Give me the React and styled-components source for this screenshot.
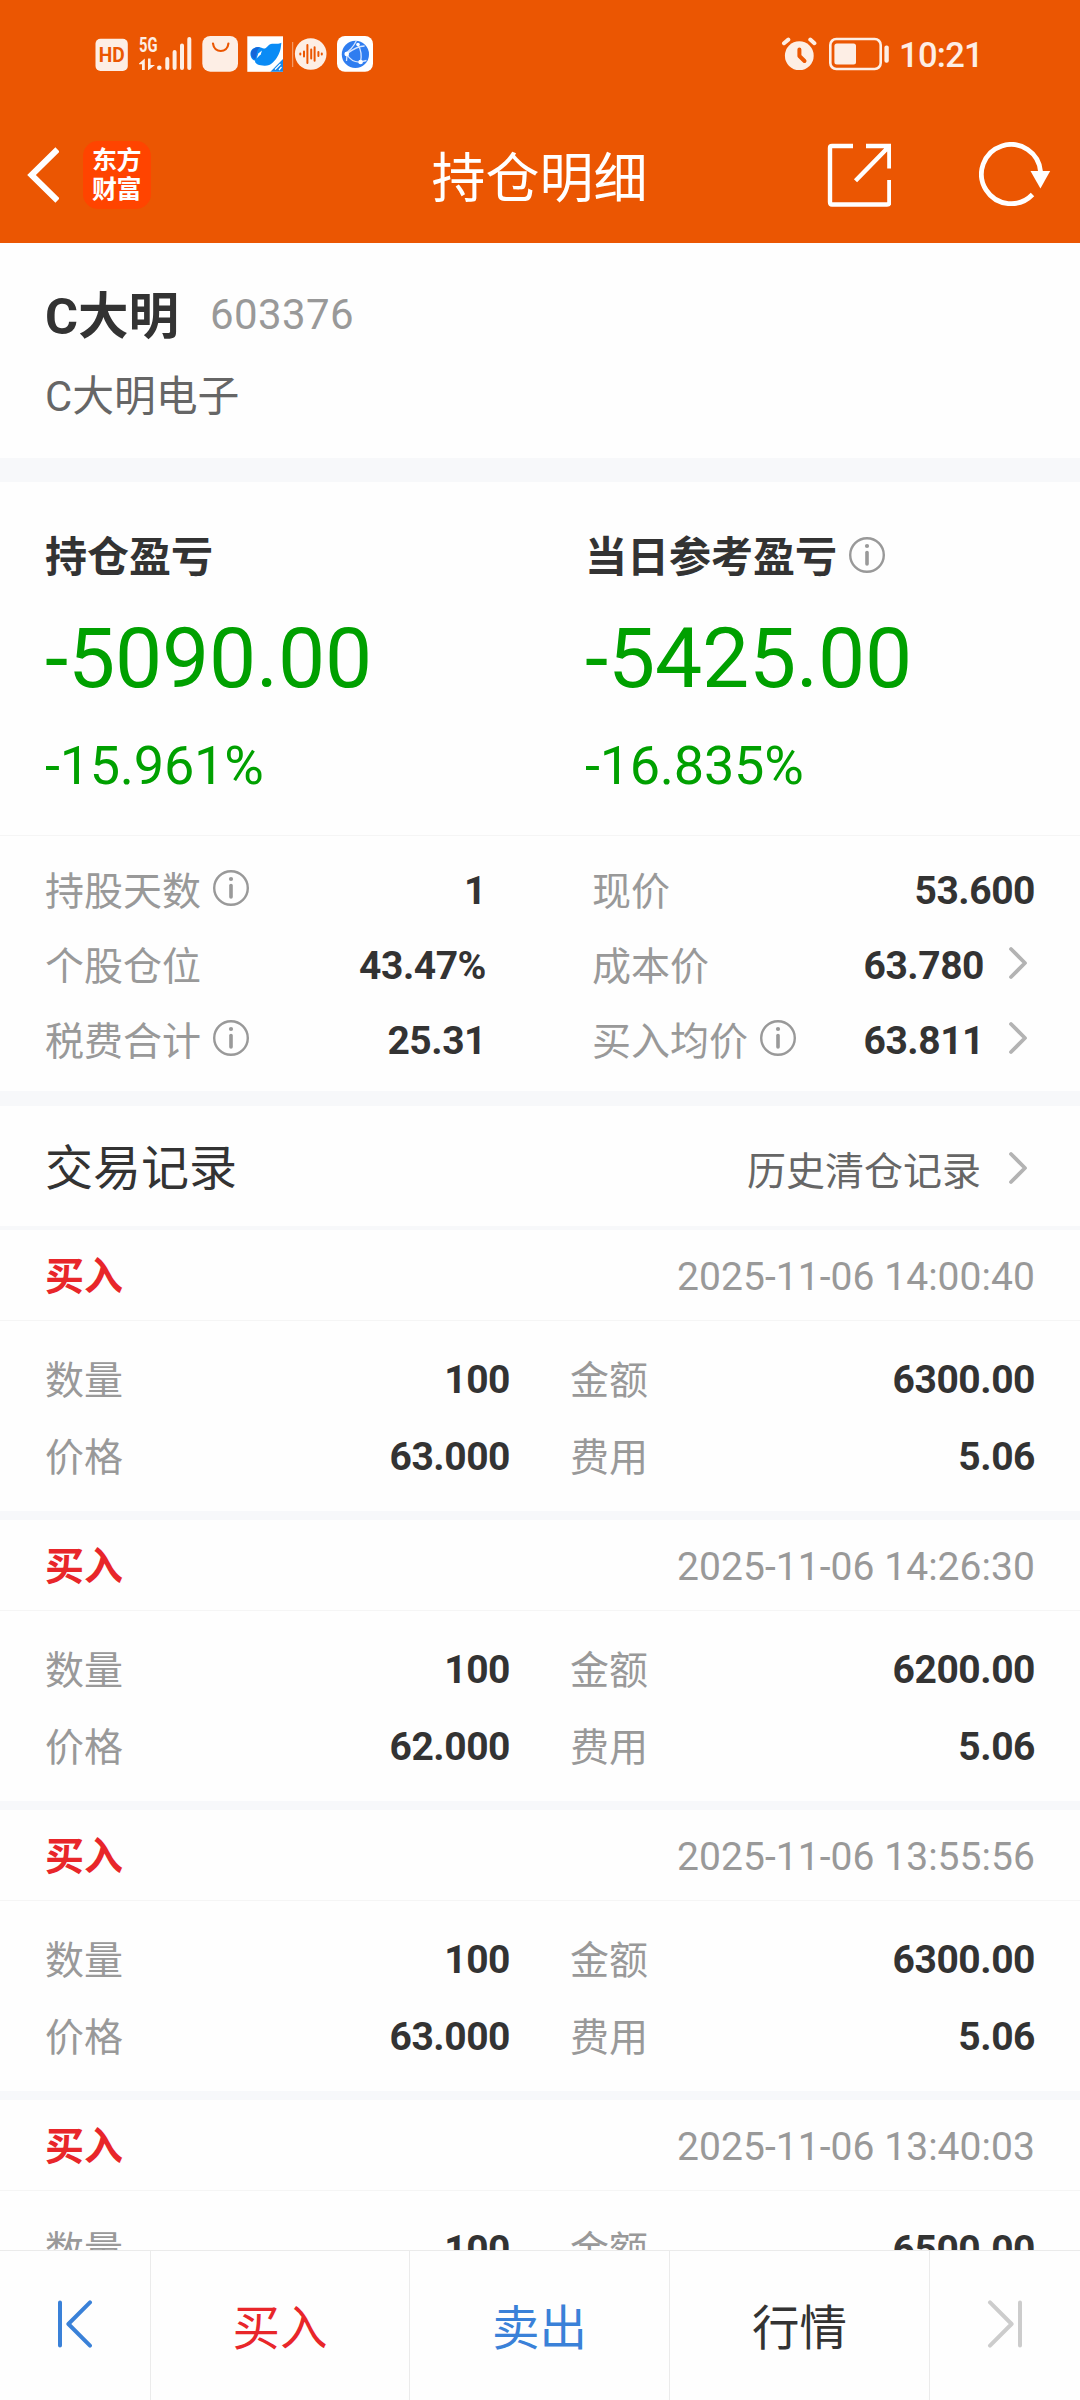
/* eslint-disable react/prop-types */
import styled, { createGlobalStyle } from 'styled-components';

const GlobalStyle = createGlobalStyle`
    * {
        box-sizing: border-box;
    }

    body {
        margin: 0;
        background: #fefefe;
        color: #333;
        font-family: Roboto, 'Noto Sans CJK SC', sans-serif;
    }

    svg {
        display: block;
        flex: none;
    }
`;

const Screen = styled.div`
    width: 1080px;
    height: 2400px;
    display: flex;
    flex-direction: column;
    overflow: hidden;
`;

const StatusBar = styled.div`
    height: 108px;
    padding: 0 97px 0 95px;
    display: flex;
    align-items: center;
    justify-content: space-between;
    background: #eb5602;
    color: #fdeee5;
    flex: none;
`;

const Clock = styled.span`
    font-size: 34.5px;
    line-height: 36px;
    letter-spacing: -0.7px;
    font-weight: 500;
    padding-top: 2px;
`;

const StatusGroup = styled.div`
    display: flex;
    align-items: center;
    gap: ${({ $gap }) => $gap}px;
`;

const TitleBar = styled.header`
    height: 135px;
    padding: 0 29px 0 27px;
    display: grid;
    grid-template-columns: 1fr auto 1fr;
    align-items: center;
    background: #eb5602;
    color: #fff;
    flex: none;
`;

const TitleSide = styled.div`
    display: flex;
    align-items: center;
    gap: ${({ $gap }) => $gap}px;
    justify-content: ${({ $end }) => ($end ? 'flex-end' : 'flex-start')};
    height: 68px;
    margin-bottom: 1px;
`;

const Title = styled.h1`
    margin: 9px 0 0 1px;
    font-size: 54px;
    line-height: 64px;
    font-weight: 400;
`;

const BrandLogo = styled.div`
    width: 68px;
    height: 68px;
    padding-right: 1px;
    border-radius: 15px;
    background: #ff4400;
    display: flex;
    flex-direction: column;
    align-items: center;
    justify-content: center;
    font-size: 25px;
    line-height: 29px;
    font-weight: 700;
    letter-spacing: -0.5px;
`;

const StockHeader = styled.section`
    height: 215px;
    padding: 38px 45px 0;
    flex: none;
`;

const StockTitle = styled.div`
    height: 68px;
    display: flex;
    align-items: center;
    gap: 31px;
`;

const StockName = styled.h2`
    margin: 3px 0 0;
    font-size: 50.5px;
    line-height: 68px;
    font-weight: 700;
`;

const StockCode = styled.span`
    color: #999;
    font-size: 42px;
    line-height: 66px;
    letter-spacing: 0.4px;
`;

const CompanyName = styled.p`
    margin: 18px 0 0;
    color: #666;
    font-size: 41.8px;
    line-height: 60px;
`;

const Divider = styled.div`
    height: ${({ $size }) => $size}px;
    background: #f7f8fa;
    flex: none;
`;

const ProfitSection = styled.section`
    height: 354px;
    padding: 45px 45px 0;
    display: grid;
    grid-template-columns: 540px 1fr;
    border-bottom: 1px solid #f5f5f5;
    flex: none;
`;

const ProfitTitle = styled.div`
    display: flex;
    align-items: center;
    gap: 12px;
    font-size: 42px;
    line-height: 62px;
    font-weight: 700;

    svg {
        margin-bottom: 6px;
    }
`;

const ProfitAmount = styled.div`
    margin-top: 20px;
    color: #00a000;
    font-size: 84px;
    line-height: 100px;
    letter-spacing: -0.2px;
`;

const ProfitRate = styled.div`
    margin-top: 25px;
    color: #00a000;
    font-size: 54px;
    line-height: 64px;
    letter-spacing: -0.25px;
`;

const StatsSection = styled.section`
    height: 255px;
    padding: 18px 45px 0;
    display: grid;
    grid-template-columns: 441px 443px;
    column-gap: 106px;
    grid-auto-rows: 75px;
    flex: none;
`;

const Field = styled.div`
    display: flex;
    align-items: center;
    font-size: 39px;
    line-height: 56px;
`;

const FieldLabel = styled.span`
    display: flex;
    align-items: center;
    gap: 12px;
    color: #999;

    svg {
        margin-bottom: 7px;
    }
`;

const FieldValue = styled.span`
    margin-left: auto;
    margin-bottom: 2px;
    font-weight: 700;
    letter-spacing: -0.45px;
`;

const SectionHeader = styled.div`
    height: 120px;
    padding: 5px 45px 0;
    display: flex;
    align-items: center;
    justify-content: space-between;
    font-size: 48px;
    line-height: 64px;
    flex: none;
`;

const HistoryLink = styled.a`
    margin-top: 6px;
    display: flex;
    align-items: center;
    color: #666;
    font-size: 39px;

    svg {
        margin-bottom: 8px;
    }
`;

const TradeList = styled.main`
    flex: 1;
    min-height: 0;
    overflow: hidden;
`;

const TradeHeader = styled.div`
    height: 91px;
    padding: 3px 45px 0;
    display: flex;
    align-items: center;
    justify-content: space-between;
    border-bottom: 1px solid #f5f5f5;
    font-size: 39px;
    line-height: 56px;
`;

const TradeType = styled.strong`
    margin-top: 1px;
    color: #e8262a;
    font-weight: 700;
`;

const TradeTime = styled.time`
    color: #999;
    letter-spacing: 0.05px;
`;

const TradeBody = styled.div`
    height: 190px;
    padding: 21px 45px 0;
    display: grid;
    grid-template-columns: 465px 465px;
    column-gap: 60px;
    grid-auto-rows: 77px;
`;

const BottomBar = styled.nav`
    height: 150px;
    display: grid;
    grid-template-columns: 151px 259px 260px 260px 150px;
    border-top: 1px solid #ebebeb;
    background: #fefefe;
    flex: none;
`;

const BottomButton = styled.button`
    padding: 7px 0 0;
    display: flex;
    align-items: center;
    justify-content: center;
    border: 0;
    border-right: 1px solid #ebebeb;
    background: none;
    color: ${({ $color }) => $color};
    font-family: inherit;
    font-size: 47.5px;
    line-height: 64px;

    &:last-child {
        border-right: 0;
    }

    svg {
        margin-bottom: 10px;
    }
`;

const InfoIcon = () => (
    <svg width="36" height="36" viewBox="0 0 36 36" fill="none" stroke="#999" strokeLinecap="round">
        <circle cx="18" cy="18" r="16.8" strokeWidth="2.4" />
        <path d="M18 15.5V27" strokeWidth="3.6" />
        <circle cx="18" cy="9" r="2.1" fill="#999" stroke="none" />
    </svg>
);

const ArrowRight = ({ gap }) => (
    <Arrow $gap={gap} width="20" height="34" viewBox="0 0 20 34" fill="none" stroke="#b3b3b3" strokeWidth="3.8" strokeLinecap="round" strokeLinejoin="round">
        <path d="M3 3L17 17L3 31" />
    </Arrow>
);

const Arrow = styled.svg`
    margin-left: ${({ $gap }) => $gap}px;
    margin-right: 7px;
    margin-bottom: 7px;
`;

// Notification icons on the left of the status bar
const StatusIcons = () => (
    <svg width="280" height="40" viewBox="95 34 280 40" fill="#fdeee5">
        <rect x="95.5" y="38.7" width="32.3" height="32.3" rx="5" />
        <text x="98.7" y="61.8" fontSize="20" fontWeight="700" textLength="26" lengthAdjust="spacingAndGlyphs" fill="#eb5602">HD</text>
        <text x="139" y="51.6" fontSize="20" fontWeight="700" textLength="18.5" lengthAdjust="spacingAndGlyphs">5G</text>
        <path d="M139 63.6L144.8 58.6V70H142V64.2H139ZM148 58.6H150.6V65H155L148.6 70H148Z" />
        <circle cx="159.3" cy="67.8" r="2.3" />
        <g stroke="#fdeee5" strokeWidth="4" strokeLinecap="round">
            <path d="M167.3 59V68M174.6 52V68M182 45.4V68M189.3 39V68" />
        </g>
        <rect x="202.3" y="36" width="35.7" height="35.7" rx="8" />
        <path d="M213 43.5C214 53.5 227.6 53.5 228.4 43.5" fill="none" stroke="#eb5602" strokeWidth="2.2" strokeLinecap="round" />
        <rect x="247.3" y="36.3" width="35.7" height="35.5" fill="#fff" />
        <path d="M250.6 55.5C249.3 49.4 256 45.3 261.5 47.8C264.8 49.8 266 47.5 268.4 45.4C272.4 41.8 277 45.4 281.4 42.8C280.8 47 281 49.8 278.6 54.5C275.4 61 270.5 66.2 264.4 65.8C258.6 65.6 254.2 63.4 255.2 60.8C252.2 59.7 251.1 58.2 250.6 55.5Z" fill="#0a8bf5" />
        <path d="M255.2 59.5C251.3 58.2 249.2 52.5 253 49.2C255 47.2 258 46.9 260 47.4C256.4 49.6 257.5 52.4 255.2 59.5Z" fill="#1565d8" />
        <path d="M256.6 58.5L258.3 53.4L262 50.4L260.8 54.2Z" fill="#fff" />
        <path d="M283 59V71.8H270.4Z" fill="#1687ea" />
        <path d="M275 69.5L280.5 64M279 70L281.5 67" stroke="#fff" strokeWidth="1.2" />
        <path d="M292.7 42V67" stroke="#fdeee5" strokeWidth="0.8" opacity="0.7" />
        <circle cx="310.7" cy="54" r="15.8" />
        <path d="M300.3 53.6V54.4M304 51.5V56.5M307.4 45V63M311.2 49.4V58.6M314.6 47.2V60.8M318.4 52V56M321.8 53.6V54.4" stroke="#eb5602" strokeWidth="2" strokeLinecap="round" />
        <rect x="337" y="36" width="36" height="35.8" rx="8" fill="#fff" />
        <circle cx="355.4" cy="54.4" r="13.6" fill="#2f7df0" />
        <g fill="none" stroke="#d6e6ff" strokeWidth="1.3">
            <path d="M345 53.5C351 50 354 45.5 356.3 41M346.6 54C349.5 59 354 62.6 360.6 62M360.6 62C361.8 56 361.2 50 358 44.6M346.6 54C353 49 359 46 364.6 46M360.6 62L366.5 60.5M347 55L346.5 61" />
        </g>
        <g fill="#fff">
            <circle cx="346.7" cy="54" r="2.3" />
            <circle cx="358" cy="44.6" r="1.8" />
            <circle cx="360.6" cy="62" r="2.3" />
        </g>
    </svg>
);

const AlarmIcon = () => (
    <svg width="36" height="34" viewBox="0 0 36 34" fill="none" strokeLinecap="round" strokeLinejoin="round">
        <circle cx="18.3" cy="18.7" r="14.4" fill="#fdeee5" />
        <path d="M3 6.2L7.3 2.6M29.3 2.6L33.4 6.2" stroke="#fdeee5" strokeWidth="4" />
        <path d="M18.4 12.5V19L23.5 24" stroke="#eb5602" strokeWidth="4" />
    </svg>
);

const BatteryIcon = () => (
    <svg width="61" height="34" viewBox="0 0 61 34" fill="none">
        <rect x="1.3" y="2" width="50.4" height="30" rx="6" stroke="#fdeee5" strokeWidth="2.6" />
        <rect x="5.4" y="6.4" width="21.6" height="21" rx="2.5" fill="#fdeee5" />
        <rect x="55.4" y="8.4" width="4.4" height="17.4" rx="2" fill="#fdeee5" />
    </svg>
);

const BackIcon = () => (
    <svg width="32" height="56" viewBox="0 0 32 56" fill="none" stroke="#fff" strokeWidth="6">
        <path d="M30.5 2.5L4.5 28L30.5 53.5" />
    </svg>
);

const ShareIcon = () => (
    <svg width="64" height="64" viewBox="0 0 64 64" fill="none" stroke="#fff" strokeWidth="4.4">
        <path d="M26 3H5Q3 3 3 5V59Q3 61.5 5 61.5H60Q62.4 61.5 62.4 59V37" />
        <path d="M39 3H62.4V25.5M61.5 4L28.5 37.8" />
    </svg>
);

const RefreshIcon = () => (
    <svg width="72" height="66" viewBox="0 0 72 66" fill="none">
        <path d="M61.6 30A29.6 29.6 0 1 0 53.5 52.5" stroke="#fff" strokeWidth="4.8" />
        <path d="M51.5 29H71.2L61.4 46.5Z" fill="#fff" />
    </svg>
);

const FirstIcon = () => (
    <svg width="36" height="48" viewBox="0 0 36 48" fill="none" stroke="#3a81d8" strokeWidth="4" strokeLinecap="round" strokeLinejoin="round">
        <path d="M3 2.4V45.6M33 2.4L11.4 24L33 45.6" />
    </svg>
);

const LastIcon = () => (
    <svg width="36" height="48" viewBox="0 0 36 48" fill="none" stroke="#ccc" strokeWidth="4" strokeLinecap="round" strokeLinejoin="round">
        <path d="M33 2.4V45.6M3 2.4L24.6 24L3 45.6" />
    </svg>
);

const stats = [
    { label: '持股天数', value: '1', info: true },
    { label: '现价', value: '53.600' },
    { label: '个股仓位', value: '43.47%' },
    { label: '成本价', value: '63.780', link: true },
    { label: '税费合计', value: '25.31', info: true },
    { label: '买入均价', value: '63.811', info: true, link: true },
];

const trades = [
    { time: '2025-11-06 14:00:40', count: '100', amount: '6300.00', price: '63.000', fee: '5.06' },
    { time: '2025-11-06 14:26:30', count: '100', amount: '6200.00', price: '62.000', fee: '5.06' },
    { time: '2025-11-06 13:55:56', count: '100', amount: '6300.00', price: '63.000', fee: '5.06' },
    { time: '2025-11-06 13:40:03', count: '100', amount: '6500.00' },
];

const DataField = ({ label, value, info, link }) => (
    <Field>
        <FieldLabel>
            {label}
            {info && <InfoIcon />}
        </FieldLabel>
        <FieldValue>{value}</FieldValue>
        {link && <ArrowRight gap={24} />}
    </Field>
);

const Trade = ({ trade }) => (
    <article>
        <TradeHeader>
            <TradeType>买入</TradeType>
            <TradeTime>{trade.time}</TradeTime>
        </TradeHeader>
        <TradeBody>
            <DataField label="数量" value={trade.count} />
            <DataField label="金额" value={trade.amount} />
            {trade.price && <DataField label="价格" value={trade.price} />}
            {trade.fee && <DataField label="费用" value={trade.fee} />}
        </TradeBody>
        <Divider $size={9} />
    </article>
);

export default function App() {
    return (
        <Screen>
            <GlobalStyle />
            <StatusBar>
                <StatusIcons />
                <StatusGroup $gap={9}>
                    <StatusGroup $gap={12}>
                        <AlarmIcon />
                        <BatteryIcon />
                    </StatusGroup>
                    <Clock>10:21</Clock>
                </StatusGroup>
            </StatusBar>

            <TitleBar>
                <TitleSide $gap={24}>
                    <BackIcon />
                    <BrandLogo>
                        <span>东方</span>
                        <span>财富</span>
                    </BrandLogo>
                </TitleSide>
                <Title>持仓明细</Title>
                <TitleSide $gap={88} $end>
                    <ShareIcon />
                    <RefreshIcon />
                </TitleSide>
            </TitleBar>

            <StockHeader>
                <StockTitle>
                    <StockName>C大明</StockName>
                    <StockCode>603376</StockCode>
                </StockTitle>
                <CompanyName>C大明电子</CompanyName>
            </StockHeader>
            <Divider $size={24} />

            <ProfitSection>
                <div>
                    <ProfitTitle>持仓盈亏</ProfitTitle>
                    <ProfitAmount>-5090.00</ProfitAmount>
                    <ProfitRate>-15.961%</ProfitRate>
                </div>
                <div>
                    <ProfitTitle>
                        当日参考盈亏
                        <InfoIcon />
                    </ProfitTitle>
                    <ProfitAmount>-5425.00</ProfitAmount>
                    <ProfitRate>-16.835%</ProfitRate>
                </div>
            </ProfitSection>

            <StatsSection>
                {stats.map(item => <DataField key={item.label} {...item} />)}
            </StatsSection>
            <Divider $size={15} />

            <SectionHeader>
                交易记录
                <HistoryLink>
                    历史清仓记录
                    <ArrowRight gap={27} />
                </HistoryLink>
            </SectionHeader>
            <Divider $size={4} />

            <TradeList>
                {trades.map(trade => <Trade key={trade.time} trade={trade} />)}
            </TradeList>

            <BottomBar>
                <BottomButton><FirstIcon /></BottomButton>
                <BottomButton $color="#e8262a">买入</BottomButton>
                <BottomButton $color="#3a81d8">卖出</BottomButton>
                <BottomButton $color="#333">行情</BottomButton>
                <BottomButton><LastIcon /></BottomButton>
            </BottomBar>
        </Screen>
    );
}
